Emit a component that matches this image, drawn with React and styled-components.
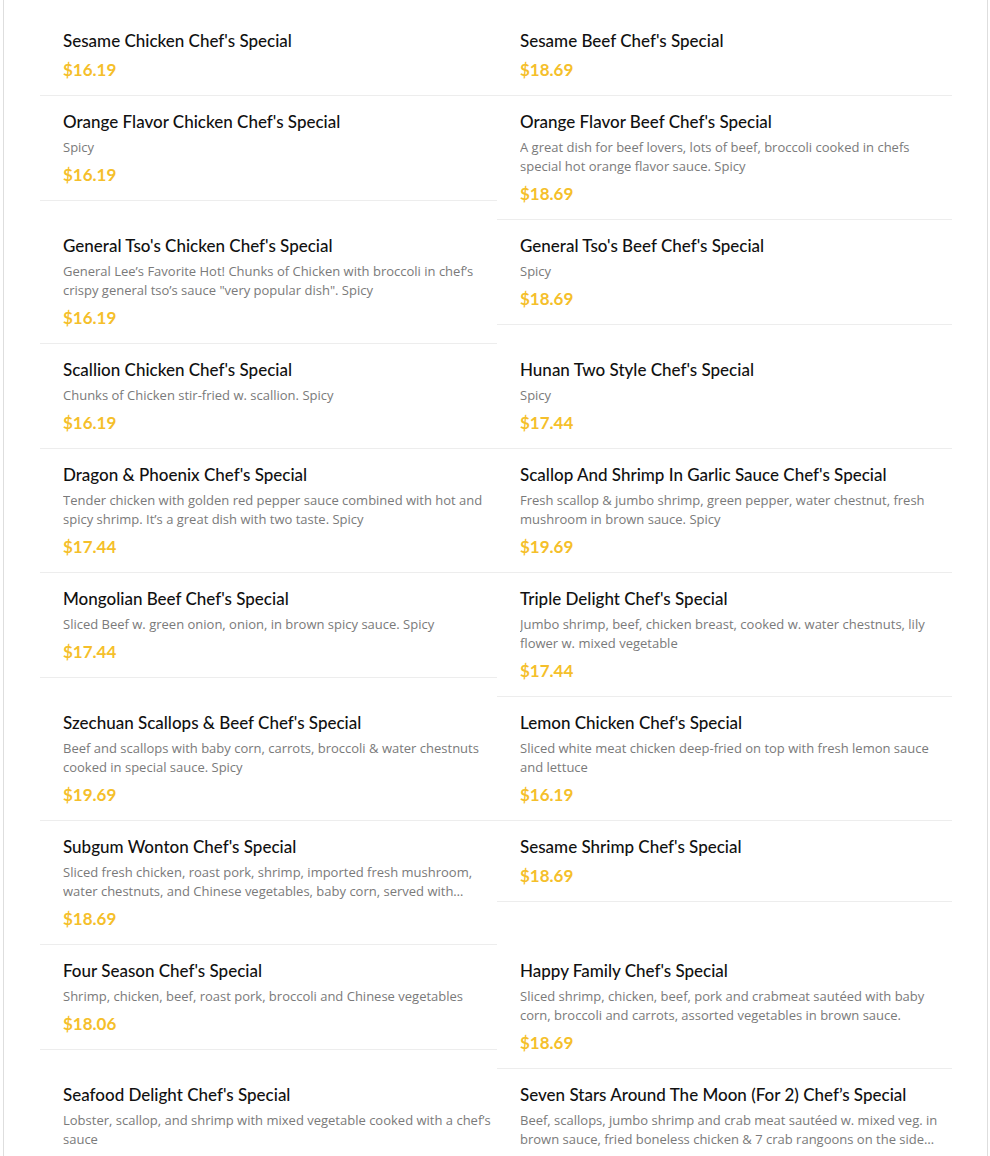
import React from 'react';
import styled, { createGlobalStyle } from 'styled-components';

const GlobalStyle = createGlobalStyle`
  body {
    margin: 0;
    background: #ffffff;
    font-family: 'Lato', 'Noto Sans', sans-serif;
  }
`;

const Page = styled.div`
  margin: 0 2px 0 3px;
  border-left: 1px solid #dedede;
  border-right: 1px solid #dedede;
  padding: 15px 36px 0 36px;
  min-height: 1156px;
  box-sizing: border-box;
`;

const Grid = styled.div`
  display: grid;
  grid-template-columns: 457px 455px;
  align-items: start;
`;

const Item = styled.div`
  padding: 15px 0 13px 23px;
  border-bottom: 1px solid #ededed;
`;

const Title = styled.div`
  font-size: 17px;
  line-height: 22px;
  font-weight: 500;
  color: #111111;
`;

const Desc = styled.div`
  margin-top: 5px;
  font-family: 'Open Sans', 'Noto Sans', sans-serif;
  font-size: 13px;
  line-height: 19px;
  color: #7a7a7a;
  display: -webkit-box;
  -webkit-line-clamp: 2;
  -webkit-box-orient: vertical;
  overflow: hidden;
`;

const Price = styled.div`
  margin-top: 6px;
  font-size: 17px;
  line-height: 24px;
  font-weight: 700;
  color: #f5bf2b;
`;

const items = [
  { name: "Sesame Chicken Chef's Special", price: '$16.19' },
  { name: "Sesame Beef Chef's Special", price: '$18.69' },
  { name: "Orange Flavor Chicken Chef's Special", desc: 'Spicy', price: '$16.19' },
  {
    name: "Orange Flavor Beef Chef's Special",
    desc: 'A great dish for beef lovers, lots of beef, broccoli cooked in chefs special hot orange flavor sauce. Spicy',
    price: '$18.69'
  },
  {
    name: "General Tso's Chicken Chef's Special",
    desc: 'General Lee\u2019s Favorite Hot! Chunks of Chicken with broccoli in chef\u2019s crispy general tso\u2019s sauce "very popular dish". Spicy',
    price: '$16.19'
  },
  { name: "General Tso's Beef Chef's Special", desc: 'Spicy', price: '$18.69' },
  {
    name: "Scallion Chicken Chef's Special",
    desc: 'Chunks of Chicken stir-fried w. scallion. Spicy',
    price: '$16.19'
  },
  { name: "Hunan Two Style Chef's Special", desc: 'Spicy', price: '$17.44' },
  {
    name: "Dragon & Phoenix Chef's Special",
    desc: 'Tender chicken with golden red pepper sauce combined with hot and spicy shrimp. It\u2019s a great dish with two taste. Spicy',
    price: '$17.44'
  },
  {
    name: "Scallop And Shrimp In Garlic Sauce Chef's Special",
    desc: 'Fresh scallop & jumbo shrimp, green pepper, water chestnut, fresh mushroom in brown sauce. Spicy',
    price: '$19.69'
  },
  {
    name: "Mongolian Beef Chef's Special",
    desc: 'Sliced Beef w. green onion, onion, in brown spicy sauce. Spicy',
    price: '$17.44'
  },
  {
    name: "Triple Delight Chef's Special",
    desc: 'Jumbo shrimp, beef, chicken breast, cooked w. water chestnuts, lily flower w. mixed vegetable',
    price: '$17.44'
  },
  {
    name: "Szechuan Scallops & Beef Chef's Special",
    desc: 'Beef and scallops with baby corn, carrots, broccoli & water chestnuts cooked in special sauce. Spicy',
    price: '$19.69'
  },
  {
    name: "Lemon Chicken Chef's Special",
    desc: 'Sliced white meat chicken deep-fried on top with fresh lemon sauce and lettuce',
    price: '$16.19'
  },
  {
    name: "Subgum Wonton Chef's Special",
    desc: 'Sliced fresh chicken, roast pork, shrimp, imported fresh mushroom, water chestnuts, and Chinese vegetables, baby corn, served with sizzling rice',
    price: '$18.69'
  },
  { name: "Sesame Shrimp Chef's Special", price: '$18.69' },
  {
    name: "Four Season Chef's Special",
    desc: 'Shrimp, chicken, beef, roast pork, broccoli and Chinese vegetables',
    price: '$18.06'
  },
  {
    name: "Happy Family Chef's Special",
    desc: 'Sliced shrimp, chicken, beef, pork and crabmeat saut\u00e9ed with baby corn, broccoli and carrots, assorted vegetables in brown sauce.',
    price: '$18.69'
  },
  {
    name: "Seafood Delight Chef's Special",
    desc: 'Lobster, scallop, and shrimp with mixed vegetable cooked with a chef\u2019s sauce',
    price: '$21.19'
  },
  {
    name: 'Seven Stars Around The Moon (For 2) Chef\u2019s Special',
    desc: 'Beef, scallops, jumbo shrimp and crab meat saut\u00e9ed w. mixed veg. in brown sauce, fried boneless chicken & 7 crab rangoons on the side with special sauce',
    price: '$27.44'
  }
];

const MenuItem = ({ item }) => (
  <Item>
    <Title>{item.name}</Title>
    {item.desc && <Desc>{item.desc}</Desc>}
    <Price>{item.price}</Price>
  </Item>
);

const App = () => {
  return (
    <>
      <GlobalStyle />
      <Page>
        <Grid>
          {items.map(item => (
            <MenuItem key={item.name} item={item} />
          ))}
        </Grid>
      </Page>
    </>
  );
};

export default App;
